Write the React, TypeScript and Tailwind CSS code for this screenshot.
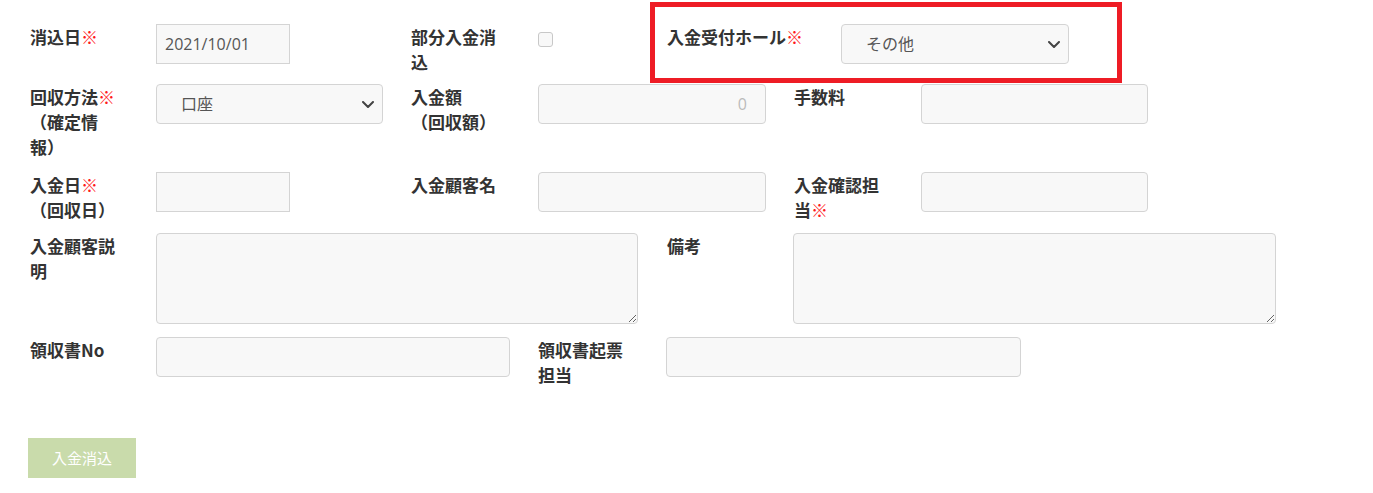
import React from "react";

const labelCls =
  "w-[97px] text-[17px] leading-[25px] font-bold text-[#333] [text-spacing-trim:space-all] [font-family:'Noto_Sans_CJK_JP','Noto_Sans',sans-serif]";
const inputCls =
  "h-[40px] border border-[#d4d4d4] bg-[#f8f8f8] text-[16px] text-[#555] outline-none [font-family:'Open_Sans','Noto_Sans_CJK_JP',sans-serif]";

function Req() {
  return <span className="text-[#ff1a1a]">※</span>;
}

function Chevron() {
  return (
    <svg width="12" height="7" viewBox="0 0 12 7" fill="none">
      <path d="M1 1l5 5 5-5" stroke="#444" strokeWidth="2" strokeLinecap="round" strokeLinejoin="round" />
    </svg>
  );
}

function Select({ value, width }: { value: string; width: string }) {
  return (
    <div className={`${inputCls} ${width} flex items-center justify-between rounded-[4px] pl-6 pr-2`}>
      <span>{value}</span>
      <Chevron />
    </div>
  );
}

export default function App() {
  return (
    <div className="min-h-[493px] w-full bg-white pl-[30px] pt-[24px]">
      {/* row 1 */}
      <div className="flex items-start">
        <div className="flex w-[381px]">
          <div className="w-[126px]">
            <p className={labelCls}>
              消込日<Req />
            </p>
          </div>
          <input className={`${inputCls} w-[134px] px-2`} defaultValue="2021/10/01" />
        </div>
        <div className="flex w-[256px]">
          <div className="w-[127px]">
            <p className={labelCls}>部分入金消込</p>
          </div>
          <div className="mt-[8px] h-[15px] w-[15px] rounded-[3px] border border-[#c8c8c8] bg-[#f8f8f8]" />
        </div>
        <div className="relative flex">
          <div className="pointer-events-none absolute -left-[17px] -top-[22px] h-[81px] w-[472px] border-[5px] border-[#ee1c25]" />
          <div className="w-[174px]">
            <p className={labelCls + " w-auto"}>
              入金受付ホール<Req />
            </p>
          </div>
          <Select value="その他" width="w-[228px]" />
        </div>
      </div>

      {/* row 2 */}
      <div className="mt-[10px] flex items-start">
        <div className="flex w-[381px]">
          <div className="w-[126px]">
            <p className={labelCls}>
              回収方法<Req />
              <br />
              （確定情
              <br />
              報）
            </p>
          </div>
          <Select value="口座" width="w-[227px]" />
        </div>
        <div className="flex w-[383px]">
          <div className="w-[127px]">
            <p className={labelCls}>
              入金額
              <br />
              （回収額）
            </p>
          </div>
          <input
            disabled
            className={`${inputCls} w-[228px] rounded-[4px] bg-[#ebebeb] pr-[18px] text-right text-[#bbb]`}
            defaultValue="0"
          />
        </div>
        <div className="flex">
          <div className="w-[127px]">
            <p className={labelCls}>手数料</p>
          </div>
          <input className={`${inputCls} w-[227px] rounded-[4px] px-3`} />
        </div>
      </div>

      {/* row 3 */}
      <div className="mt-[13px] flex items-start">
        <div className="flex w-[381px]">
          <div className="w-[126px]">
            <p className={labelCls}>
              入金日<Req />
              <br />
              （回収日）
            </p>
          </div>
          <input className={`${inputCls} w-[134px] px-2`} />
        </div>
        <div className="flex w-[383px]">
          <div className="w-[127px]">
            <p className={labelCls}>入金顧客名</p>
          </div>
          <input className={`${inputCls} w-[228px] rounded-[4px] px-3`} />
        </div>
        <div className="flex">
          <div className="w-[127px]">
            <p className={labelCls}>
              入金確認担
              <br />
              当<Req />
            </p>
          </div>
          <input className={`${inputCls} w-[227px] rounded-[4px] px-3`} />
        </div>
      </div>

      {/* row 4 */}
      <div className="mt-[11px] flex items-start">
        <div className="flex w-[637px]">
          <div className="w-[126px]">
            <p className={labelCls}>
              入金顧客説
              <br />明
            </p>
          </div>
          <textarea className={`${inputCls} h-[91px] w-[482px] rounded-[4px] px-3 py-2`} />
        </div>
        <div className="flex">
          <div className="w-[126px]">
            <p className={labelCls}>備考</p>
          </div>
          <textarea className={`${inputCls} h-[91px] w-[483px] rounded-[4px] px-3 py-2`} />
        </div>
      </div>

      {/* row 5 */}
      <div className="mt-[13px] flex items-start">
        <div className="flex w-[508px]">
          <div className="w-[126px]">
            <p className={labelCls}>領収書No</p>
          </div>
          <input className={`${inputCls} w-[354px] rounded-[4px] px-3`} />
        </div>
        <div className="flex">
          <div className="w-[128px]">
            <p className={labelCls}>
              領収書起票
              <br />
              担当
            </p>
          </div>
          <input className={`${inputCls} w-[355px] rounded-[4px] px-3`} />
        </div>
      </div>

      <button className="-ml-[2px] mt-[51px] h-[40px] w-[108px] bg-[#c9dbab] text-[15px] text-white [font-family:'Noto_Sans_CJK_JP',sans-serif]">
        入金消込
      </button>
    </div>
  );
}
